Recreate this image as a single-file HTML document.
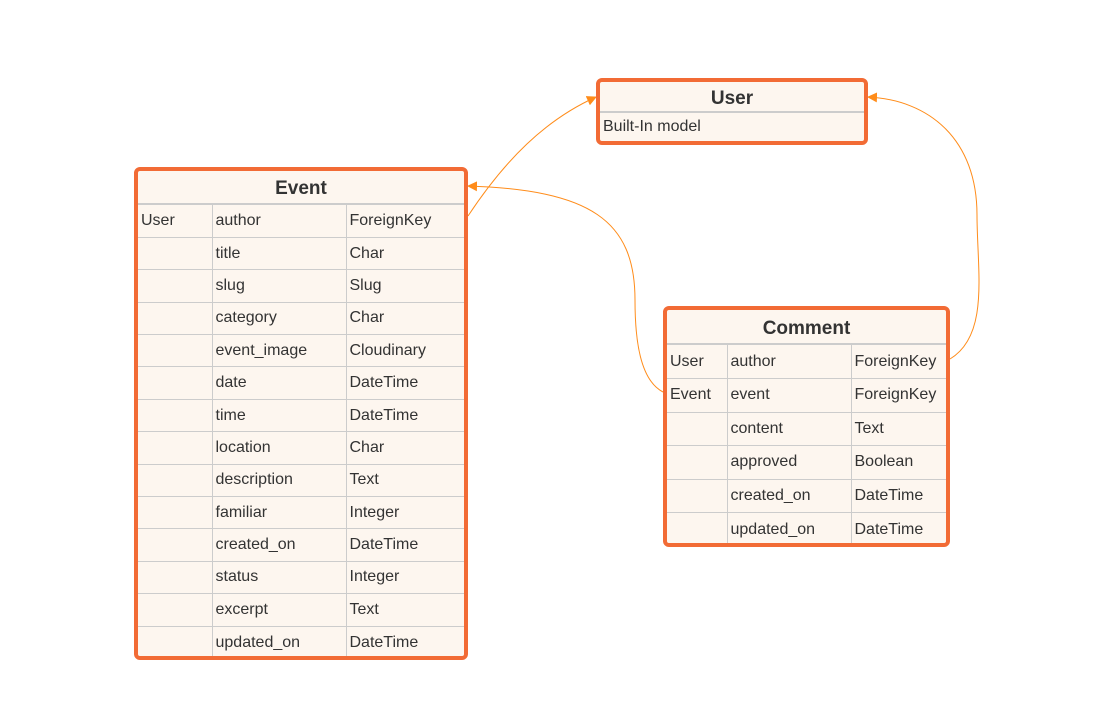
<!DOCTYPE html>
<html><head><meta charset="utf-8"><style>
body{margin:0;width:1102px;height:723px;background:#fff;position:relative;overflow:hidden;font-family:"Liberation Sans",Arial,sans-serif;color:#333}
.box{position:absolute;border:4px solid #f26b35;border-radius:6px;background:#fdf6ef;box-sizing:border-box;overflow:hidden}
.h{font-weight:bold;font-size:19px;text-align:center;border-bottom:2px solid #ccc;box-sizing:border-box}
table{border-collapse:collapse;width:100%;font-size:16px}
td{border:1px solid #ccc;padding:0 0 0 3px;box-sizing:border-box}
tr:first-child td{border-top:none}
tr:last-child td{border-bottom:none}
td:first-child{border-left:none}
td:last-child{border-right:none}
svg{position:absolute;left:0;top:0}
</style></head><body>
<svg width="1102" height="723">
<defs><marker id="a" markerWidth="10" markerHeight="10" refX="9" refY="5" orient="auto" markerUnits="userSpaceOnUse"><path d="M0,0 L10,5 L0,10z" fill="#ff8c1a"/></marker></defs>
<g fill="none" stroke="#ff8c1a" stroke-width="1">
<path d="M468,216 C505,160 545,120 596,97" marker-end="url(#a)"/>
<path d="M950,359 C990,335 977,270 977,215 C977,140 930,100 868,97" marker-end="url(#a)"/>
<path d="M663,392 C640,380 635,340 635,300 C635,220 590,190 468,186" marker-end="url(#a)"/>
</g></svg>

<div class="box" style="left:596px;top:78px;width:272px;height:67px">
<div class="h" style="height:31px;line-height:33px">User</div>
<div style="font-size:16px;padding:5px 0 0 3px">Built-In model</div>
</div>

<div class="box" style="left:134px;top:167px;width:334px;height:493px">
<div class="h" style="height:34px;line-height:36px">Event</div>
<table>
<colgroup><col style="width:74px"><col style="width:134px"><col></colgroup>
<tr style="height:32.4px"><td>User</td><td>author</td><td>ForeignKey</td></tr>
<tr style="height:32.4px"><td></td><td>title</td><td>Char</td></tr>
<tr style="height:32.4px"><td></td><td>slug</td><td>Slug</td></tr>
<tr style="height:32.4px"><td></td><td>category</td><td>Char</td></tr>
<tr style="height:32.4px"><td></td><td>event_image</td><td>Cloudinary</td></tr>
<tr style="height:32.4px"><td></td><td>date</td><td>DateTime</td></tr>
<tr style="height:32.4px"><td></td><td>time</td><td>DateTime</td></tr>
<tr style="height:32.4px"><td></td><td>location</td><td>Char</td></tr>
<tr style="height:32.4px"><td></td><td>description</td><td>Text</td></tr>
<tr style="height:32.4px"><td></td><td>familiar</td><td>Integer</td></tr>
<tr style="height:32.4px"><td></td><td>created_on</td><td>DateTime</td></tr>
<tr style="height:32.4px"><td></td><td>status</td><td>Integer</td></tr>
<tr style="height:32.4px"><td></td><td>excerpt</td><td>Text</td></tr>
<tr style="height:32.4px"><td></td><td>updated_on</td><td>DateTime</td></tr>
</table></div>

<div class="box" style="left:663px;top:306px;width:287px;height:241px">
<div class="h" style="height:35px;line-height:38px">Comment</div>
<table>
<colgroup><col style="width:60px"><col style="width:124px"><col></colgroup>
<tr style="height:33.5px"><td>User</td><td>author</td><td>ForeignKey</td></tr>
<tr style="height:33.5px"><td>Event</td><td>event</td><td>ForeignKey</td></tr>
<tr style="height:33.5px"><td></td><td>content</td><td>Text</td></tr>
<tr style="height:33.5px"><td></td><td>approved</td><td>Boolean</td></tr>
<tr style="height:33.5px"><td></td><td>created_on</td><td>DateTime</td></tr>
<tr style="height:33.5px"><td></td><td>updated_on</td><td>DateTime</td></tr>
</table></div>
</body></html>
